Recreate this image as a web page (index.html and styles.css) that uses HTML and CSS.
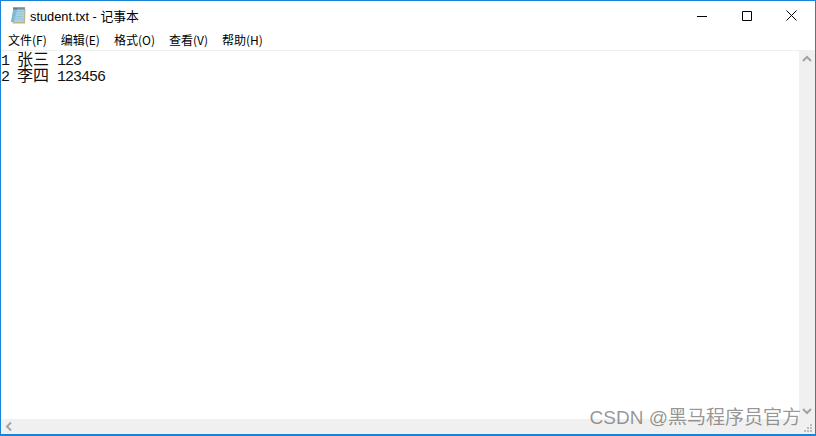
FILE: index.html
```html
<!DOCTYPE html>
<html lang="zh-CN">
<head>
<meta charset="utf-8">
<title>student.txt - 记事本</title>
<link rel="stylesheet" href="styles.css">
</head>
<body>
<div class="window">
  <header class="titlebar">
    <svg class="app-icon" width="16" height="17" viewBox="0 0 16 17">
      <path d="M5 2h10.500l-.5 14.500H2.500z" fill="#c4b184"/>
      <path d="M3.500 1h11L13.500 15H1z" fill="#a5d4e6"/>
      <path d="M3.500 1h4L4 15H1z" fill="#7fb6cf"/>
      <path d="M4 4.500h9.500M3.800 7h9.500M3.500 9.500h9.500M3.200 12h9.500" stroke="#8fc3d8" stroke-width=".8"/>
      <path d="M4 0v2.500M6 0v2.500M8 0v2.500M10 0v2.500M12 0v2.500M14 0v2.500" stroke="#3a4a52" stroke-width="1"/>
    </svg>
    <span class="title">student.txt - 记事本</span>
    <div class="controls">
      <span class="ctl"><svg width="10" height="10" viewBox="0 0 10 10"><path d="M0 5.500h10" stroke="#000" fill="none"/></svg></span>
      <span class="ctl"><svg width="10" height="10" viewBox="0 0 10 10"><path d="M.5.500h9v9h-9z" stroke="#000" fill="none"/></svg></span>
      <span class="ctl"><svg width="11" height="11" viewBox="0 0 11 11"><path d="M.5.500l10 10M10.500.500l-10 10" stroke="#000" stroke-width="1" fill="none"/></svg></span>
    </div>
  </header>
  <nav class="menubar">
    <span class="menu">文件(F)</span>
    <span class="menu">编辑(E)</span>
    <span class="menu">格式(O)</span>
    <span class="menu">查看(V)</span>
    <span class="menu">帮助(H)</span>
  </nav>
  <div class="body">
    <div class="editor-row">
      <div class="editor">
        <div class="line">1 <span class="cjk">张三</span> 123</div>
        <div class="line">2 <span class="cjk">李四</span> 123456</div>
      </div>
      <div class="vscroll">
        <svg width="16" height="17" viewBox="0 0 16 17"><path d="M4 10l4-4 4 4" stroke="#a3a3a3" stroke-width="2" fill="none"/></svg>
        <svg width="16" height="17" viewBox="0 0 16 17"><path d="M4 7l4 4 4-4" stroke="#a3a3a3" stroke-width="2" fill="none"/></svg>
      </div>
    </div>
    <div class="hscroll">
      <svg width="17" height="15" viewBox="0 0 17 15"><path d="M10 3.500l-4 4 4 4" stroke="#a3a3a3" stroke-width="2" fill="none"/></svg>
      <svg width="16" height="15" viewBox="0 0 16 15"><path d="M11 5h2v2h-2zM11 8h2v2h-2zM11 11h2v2h-2zM8 8h2v2H8zM8 11h2v2H8zM5 11h2v2H5z" fill="#bcbcbc"/></svg>
    </div>
  </div>
  <div class="watermark">CSDN @黑马程序员官方</div>
</div>
</body>
</html>
```
FILE: styles.css
```css
* { box-sizing: border-box; }
html, body { margin: 0; padding: 0; height: 100%; overflow: hidden; }
body { background: #fff; }
.window {
  position: relative;
  width: 816px;
  height: 436px;
  border: 1px solid #1883d7;
  border-bottom-width: 2px;
  display: flex;
  flex-direction: column;
  background: #fff;
  font-family: "Noto Sans CJK SC", sans-serif;
  color: #000;
}
.titlebar {
  height: 29px;
  display: flex;
  align-items: center;
  padding-left: 9px;
  flex: none;
}
.app-icon { margin-right: 4px; flex: none; }
.title { font-family: "Liberation Sans", "Noto Sans CJK SC", sans-serif; font-size: 12.8px; }
.controls { margin-left: auto; display: flex; height: 29px; padding-right: 1px; }
.ctl { width: 45px; display: flex; align-items: center; justify-content: center; }
.menubar {
  height: 20px;
  display: flex;
  flex: none;
  align-items: flex-start;
  font-size: 12px;
  line-height: 20px;
}
.menu { padding: 0 7px; white-space: nowrap; }
.body {
  flex: 1;
  min-height: 0;
  display: flex;
  flex-direction: column;
  border-top: 1px solid #f0f0f0;
}
.editor-row { flex: 1; min-height: 0; display: flex; }
.editor {
  flex: 1;
  font-family: "Liberation Mono", "Noto Sans CJK SC", monospace;
  font-size: 15px;
  letter-spacing: -1px;
  color: #111;
}
.line {
  height: 16px;
  line-height: 14px;
  white-space: pre;
}
.cjk {
  font-family: "Noto Sans CJK SC", sans-serif;
  font-size: 16px;
  font-weight: 400;
  letter-spacing: 0;
  line-height: 14px;
}
.vscroll {
  width: 16px;
  background: #f0f0f0;
  display: flex;
  flex-direction: column;
  justify-content: space-between;
  flex: none;
}
.hscroll {
  height: 15px;
  background: #f0f0f0;
  display: flex;
  justify-content: space-between;
  flex: none;
}
.watermark {
  position: absolute;
  right: 14px;
  bottom: 4px;
  font-family: "Liberation Sans", "Noto Sans CJK SC", sans-serif;
  font-size: 19px;
  line-height: 24px;
  color: rgba(80, 80, 80, .6);
  white-space: nowrap;
}
```
